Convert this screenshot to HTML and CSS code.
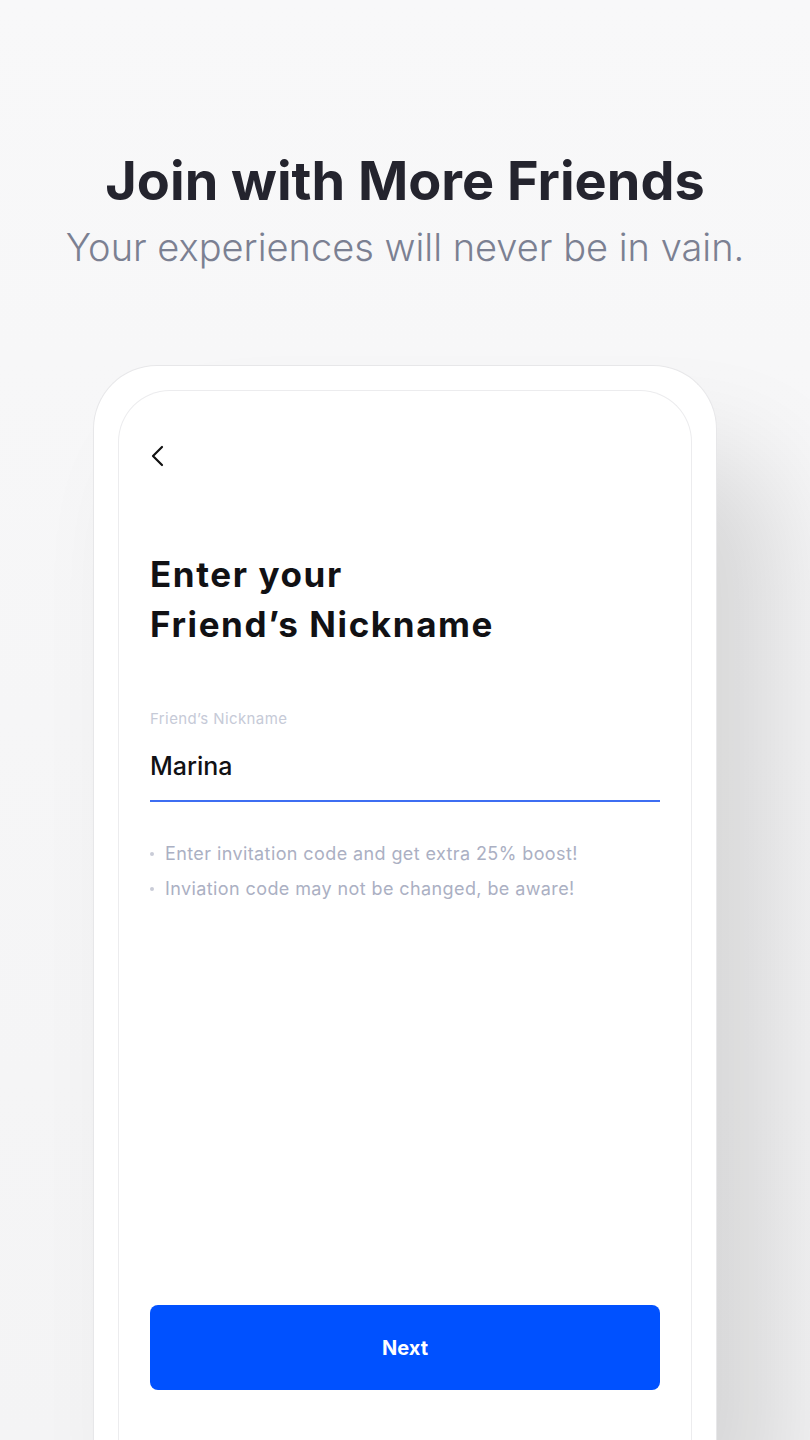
FILE: index.html
```html
<!DOCTYPE html>
<html lang="en">
<head>
    <meta charset="UTF-8">
    <meta name="viewport" content="width=device-width, initial-scale=1.0">
    <title>Join with More Friends</title>
    <link rel="stylesheet" href="styles.css">
</head>
<body>
    <header class="intro">
        <h1>Join with More Friends</h1>
        <p>Your experiences will never be in vain.</p>
    </header>

    <div class="phone">
        <div class="screen">
            <a href="#" class="back-link">
                <svg width="14" height="22" viewBox="0 0 14 22">
                    <path d="M12 2 L3 11 L12 20" fill="none" stroke="#111" stroke-width="2.2" stroke-linecap="round" stroke-linejoin="round"/>
                </svg>
            </a>

            <h2>Enter your<br>Friend’s Nickname</h2>

            <form class="nickname-form" onsubmit="return false">
                <label for="nickname">Friend’s Nickname</label>
                <input type="text" id="nickname" name="nickname" value="Marina">

                <ul class="hints">
                    <li>Enter invitation code and get extra 25% boost!</li>
                    <li>Inviation code may not be changed, be aware!</li>
                </ul>

                <button type="submit" class="next-button">Next</button>
            </form>
        </div>
    </div>
</body>
</html>
```

FILE: styles.css
```css
        body {
            margin: 0;
            padding: 0;
            height: 1440px;
            overflow: hidden;
            background: linear-gradient(180deg, #f8f8f9 0%, #f4f4f5 100%);
            font-family: "Inter", "Lato", sans-serif;
        }

        /* Top heading */
        .intro {
            text-align: center;
            padding-top: 148px;
        }

        .intro h1 {
            margin: 0;
            font-size: 54px;
            font-weight: 700;
            line-height: 66px;
            color: #24242e;
            letter-spacing: 0;
        }

        .intro p {
            margin: 5px 0 0;
            font-size: 38px;
            font-weight: 300;
            line-height: 56px;
            color: #7b8092;
        }

        /* Phone frame, cut off by the bottom of the page */
        .phone {
            box-sizing: border-box;
            width: 624px;
            height: 1075px;
            margin: 90px 0 0 93px;
            padding: 24px 24px 0;
            background-color: #fff;
            border: 1px solid #e7e7e9;
            border-bottom: none;
            border-radius: 64px 64px 0 0;
            box-shadow: 60px 90px 110px rgba(0, 0, 0, 0.13);
        }

        .screen {
            height: 100%;
            padding: 54px 31px 0;
            border: 1px solid #ececee;
            border-bottom: none;
            border-radius: 52px 52px 0 0;
            box-sizing: border-box;
        }

        .back-link {
            display: block;
            width: 14px;
            height: 22px;
        }

        .screen h2 {
            margin: 82px 0 0;
            font-size: 35px;
            font-weight: 700;
            line-height: 50px;
            letter-spacing: 1.6px;
            color: #111114;
        }

        .nickname-form label {
            display: block;
            margin-top: 60px;
            font-size: 15px;
            letter-spacing: 0.4px;
            color: #c6cad7;
        }

        .nickname-form input {
            display: block;
            width: 100%;
            box-sizing: border-box;
            margin-top: 23px;
            padding: 0 0 19px;
            border: none;
            border-bottom: 2px solid #3d6ef2;
            outline: none;
            font-family: inherit;
            font-size: 25px;
            font-weight: 500;
            color: #111114;
            background: transparent;
        }

        .hints {
            list-style: none;
            margin: 34px 0 0;
            padding: 0;
        }

        .hints li {
            position: relative;
            padding-left: 15px;
            font-size: 18px;
            line-height: 35px;
            letter-spacing: 0.4px;
            color: #abb0c3;
        }

        .hints li::before {
            content: "";
            position: absolute;
            left: 0;
            top: 16px;
            width: 4px;
            height: 4px;
            border-radius: 50%;
            background-color: #c9ccd7;
        }

        .next-button {
            display: block;
            width: 100%;
            height: 85px;
            margin-top: 399px;
            border: none;
            border-radius: 8px;
            background-color: #0051ff;
            color: #fff;
            font-family: inherit;
            font-size: 20px;
            font-weight: 700;
            cursor: pointer;
        }
```
